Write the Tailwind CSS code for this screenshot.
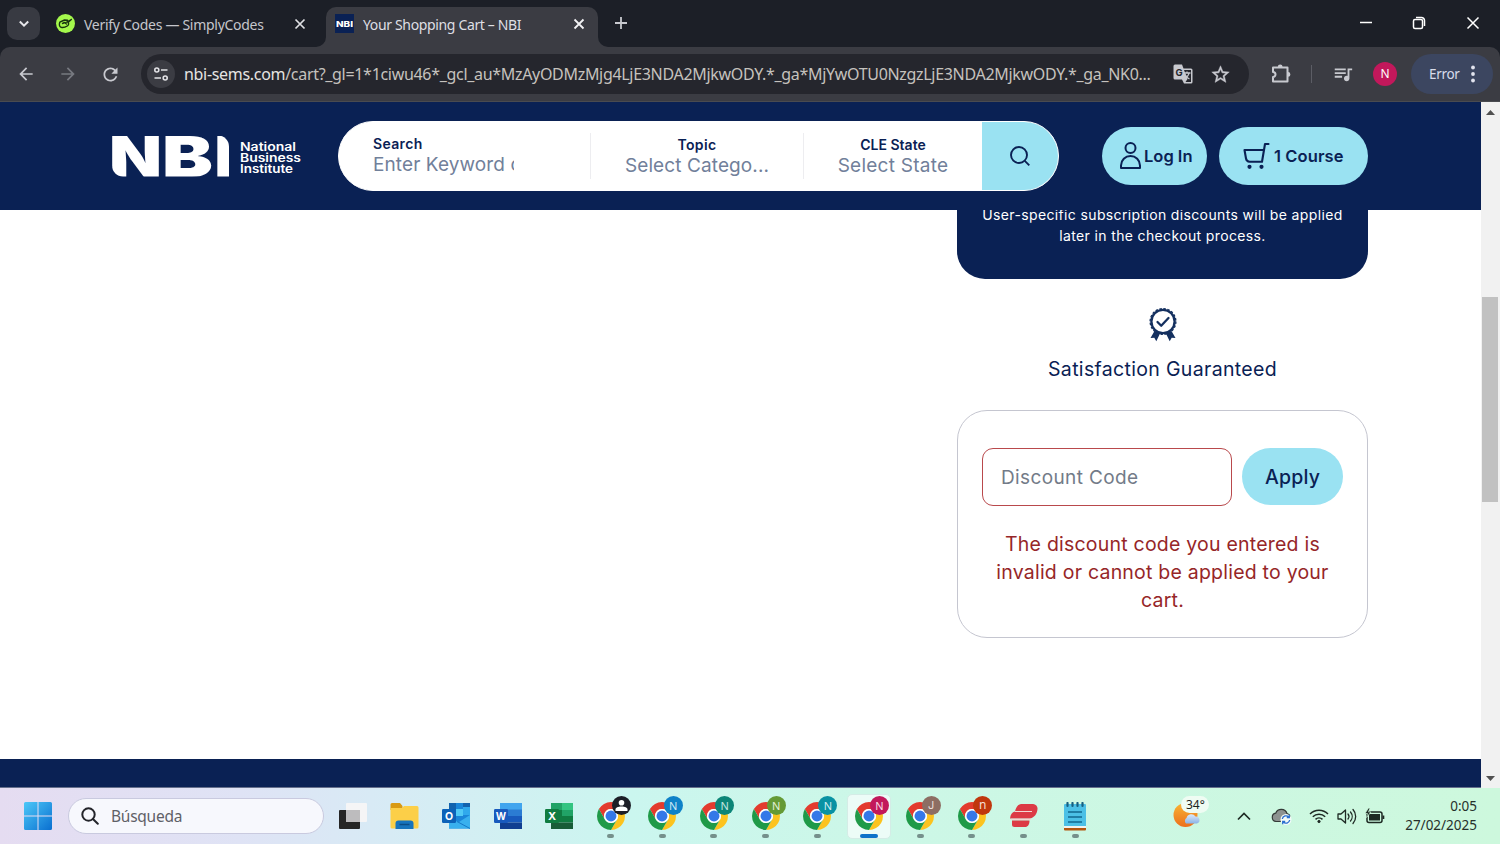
<!DOCTYPE html>
<html lang="en">
<head>
<meta charset="utf-8">
<title>Your Shopping Cart – NBI</title>
<script src="https://cdn.jsdelivr.net/npm/@tailwindcss/browser@4"></script>
</head>
<body class="w-[1500px] h-[844px] overflow-hidden flex flex-col bg-white font-['Noto_Sans',sans-serif]">
<svg class="hidden">
  <symbol id="chrome" viewBox="2 2 44 44">
    <path fill="#e33b2e" d="M24 13H43.05A22 22 0 0 0 4.95 13L14.47 29.5A11 11 0 0 1 24 13z"/>
    <path fill="#fcc31e" d="M43.05 13A22 22 0 0 1 24 46L33.53 29.5A11 11 0 0 0 24 13z"/>
    <path fill="#1f9a48" d="M24 46A22 22 0 0 1 4.95 13L14.47 29.5A11 11 0 0 0 33.53 29.5z"/>
    <circle cx="24" cy="24" r="11" fill="#fff"/><circle cx="24" cy="24" r="8.6" fill="#3478e8"/>
  </symbol>
</svg>

<!-- Tab strip -->
<div class="h-[47px] shrink-0 bg-[#1c1f27] flex items-end">
  <div class="w-[33px] h-[33px] ml-[7px] mb-[7px] rounded-[10px] bg-[#383a42] flex items-center justify-center">
    <svg width="12" height="8" viewBox="0 0 12 8" fill="none" stroke="#e6e6ea" stroke-width="2"><path d="M1.8 1.5 6 5.7l4.2-4.2"/></svg>
  </div>
  <div class="h-10 w-[286px] pl-4 pb-[7px] flex items-center">
    <svg width="19" height="19" viewBox="0 0 19 19"><circle cx="9.5" cy="9.5" r="9.5" fill="#a4f84c"/><path d="M3.8 8.2 8.5 6l3 .3M3.8 8.2c-1 2.500-.3 5 2 5.300 2 .2 4-.5 5.500-1.500 1.500-1 1.700-2.500.7-3.500L15.300 5.500M15.300 5.500 9 9l1.500 1M6.500 9.500l2-1" fill="none" stroke="#17320f" stroke-width="1.4" stroke-linecap="round" stroke-linejoin="round"/></svg>
    <span class="ml-[9px] w-[206px] text-[14px] tracking-[-0.290px] text-[#c5c6cc] whitespace-nowrap leading-5 pt-0.5">Verify Codes — SimplyCodes</span>
    <svg class="ml-1" width="12" height="12" viewBox="0 0 12 12" stroke="#dedfe3" stroke-width="1.700"><path d="m1.500 1.500 9 9M10.500 1.500l-9 9"/></svg>
  </div>
  <div class="relative h-10 w-[272px] rounded-t-[10px] bg-[#3b3c43] pl-[9px] pb-[7px] flex items-center">
    <svg class="absolute -left-[10px] bottom-0" width="10" height="10"><path fill="#3b3c43" d="M10 0v10H0A10 10 0 0 0 10 0z"/></svg>
    <svg class="absolute -right-[10px] bottom-0" width="10" height="10"><path fill="#3b3c43" d="M0 0v10h10A10 10 0 0 1 0 0z"/></svg>
    <div class="w-[19px] h-[19px] bg-[#0a2154] flex items-center justify-center"><svg class="overflow-visible" width="17" height="8"><text x="0" y="7" textLength="17" lengthAdjust="spacingAndGlyphs" font-family="Inter" font-weight="800" font-size="8" fill="#fff">NBI</text></svg></div>
    <span class="ml-[9px] w-[206px] text-[14px] tracking-[-0.350px] text-[#dfdfe4] whitespace-nowrap leading-5 pt-0.5">Your Shopping Cart – NBI</span>
    <svg class="ml-1" width="12" height="12" viewBox="0 0 12 12" stroke="#f2f2f4" stroke-width="1.800"><path d="m1.500 1.500 9 9M10.500 1.500l-9 9"/></svg>
  </div>
  <svg class="ml-4 mb-[17px]" width="14" height="14" viewBox="0 0 14 14" stroke="#c8c9cf" stroke-width="1.800"><path d="M7 1v12M1 7h12"/></svg>
  <div class="ml-auto mr-5 mb-[17px] flex items-center gap-[40px] text-white">
    <svg width="12" height="14" viewBox="0 0 12 14" stroke="currentColor" stroke-width="1.500"><path d="M0 6.500h12"/></svg>
    <svg width="14" height="14" viewBox="0 0 14 14" fill="none" stroke="currentColor" stroke-width="1.500"><rect x="1.500" y="3.500" width="9" height="9" rx="1.500"/><path d="M4 1.500h5.500a3 3 0 0 1 3 3V10"/></svg>
    <svg width="14" height="14" viewBox="0 0 14 14" stroke="currentColor" stroke-width="1.500"><path d="m1.500 1.500 11 11M12.500 1.500l-11 11"/></svg>
  </div>
</div>

<!-- Toolbar -->
<div class="h-[55px] shrink-0 bg-[#1c1f27]"><div class="h-full rounded-t-[10px] bg-[#3b3c43] border-b border-[#4a4b50] flex items-center">
  <svg class="ml-4" width="20" height="20" viewBox="0 0 24 24" fill="#c8c9cf"><path d="M20 11H7.830l5.590-5.590L12 4l-8 8 8 8 1.410-1.410L7.830 13H20v-2z"/></svg>
  <svg class="ml-[22px]" width="20" height="20" viewBox="0 0 24 24" fill="#777980"><path d="m12 4-1.410 1.410L16.170 11H4v2h12.170l-5.580 5.590L12 20l8-8z"/></svg>
  <svg class="ml-[22px]" width="21" height="21" viewBox="0 0 24 24" fill="#c8c9cf"><path d="M17.650 6.350C16.200 4.900 14.210 4 12 4c-4.420 0-7.990 3.580-7.990 8s3.570 8 7.990 8c3.730 0 6.840-2.550 7.730-6h-2.080c-.820 2.330-3.040 4-5.650 4-3.310 0-6-2.690-6-6s2.690-6 6-6c1.660 0 3.140.690 4.220 1.780L13 11h7V4l-2.350 2.350z"/></svg>
  <div class="ml-5 w-[1108px] h-10 rounded-full bg-[#25262d] flex items-center pl-[6px] pr-[18px]">
    <div class="w-7 h-7 shrink-0 rounded-full bg-[#3b3c43] flex items-center justify-center">
      <svg width="16" height="16" viewBox="0 0 16 16" fill="none" stroke="#e2e2e6" stroke-width="1.600"><circle cx="3.800" cy="4" r="2"/><path d="M8 4h6.500M1.500 12H8"/><circle cx="12.200" cy="12" r="2"/></svg>
    </div>
    <span class="ml-[9px] w-[990px] text-[16px] tracking-[-0.310px] leading-6 whitespace-nowrap text-[#c5c2be]"><span class="text-[#e6e4e2]">nbi-sems.com</span>/cart?_gl=1*1ciwu46*_gcl_au*MzAyODMzMjg4LjE3NDA2MjkwODY.*_ga*MjYwOTU0NzgzLjE3NDA2MjkwODY.*_ga_NK0...</span>
    <svg class="shrink-0" width="20" height="20" viewBox="0 0 20 20"><path d="M2 .5h7l1.500 4H18a1.500 1.500 0 0 1 1.500 1.500v12a1.500 1.500 0 0 1-1.500 1.500h-7l-2-4H2A1.500 1.500 0 0 1 .5 14V2A1.500 1.500 0 0 1 2 .5z" fill="#c8c9cf"/><path d="M11 6h7v12h-5.500l2-3z" fill="#25262d"/><text x="2.500" y="12" font-family="Inter" font-weight="700" font-size="9.500" fill="#25262d">G</text><path d="M11 9h6.500M14 7.500V9m2 0c-.5 3-2.500 4.500-4.500 5.500m.5-4c1 2 2.500 3.500 4.500 4.500" fill="none" stroke="#c8c9cf" stroke-width="1.300"/></svg>
    <svg class="ml-[17px] shrink-0" width="21" height="21" viewBox="0 0 24 24" fill="#c8c9cf" stroke="#c8c9cf" stroke-width=".5"><path d="M22 9.240l-7.190-.620L12 2 9.190 8.630 2 9.240l5.460 4.730L5.820 21 12 17.270 18.180 21l-1.630-7.030L22 9.240zM12 15.400l-3.760 2.270 1-4.280-3.320-2.880 4.380-.380L12 6.100l1.710 4.040 4.380.380-3.320 2.880 1 4.280L12 15.400z"/></svg>
  </div>
  <svg class="ml-[22px]" width="20" height="20" viewBox="0 0 20 20"><path d="M2 3.500h14.500V17.500H2V13a2.500 2.500 0 0 0 0-5z" fill="none" stroke="#c8c9cf" stroke-width="2" stroke-linejoin="round"/><path d="M6.800 3a2.400 2.400 0 0 1 4.800 0zM17 8a2.400 2.400 0 0 1 0 4.800z" fill="#c8c9cf"/></svg>
  <div class="ml-5 w-px h-[18px] bg-[#5c5d65]"></div>
  <svg class="ml-5" width="22" height="22" viewBox="0 0 24 24" fill="#c8c9cf"><path d="M15 6H3v2h12V6zm0 4H3v2h12v-2zM3 16h8v-2H3v2zM17 6v8.180c-.310-.110-.650-.180-1-.180-1.660 0-3 1.340-3 3s1.340 3 3 3 3-1.340 3-3V8h3V6h-5z"/></svg>
  <div class="ml-[19px] w-6 h-6 rounded-full bg-[#c2185b] text-white text-[12px] leading-6 text-center">N</div>
  <div class="ml-[14px] w-[82px] h-10 rounded-full bg-[#3c4660] flex items-center pl-[18px]">
    <span class="w-[42px] text-[13.500px] tracking-[-0.300px] text-[#d8dcea]">Error</span>
    <svg width="4" height="18" fill="#e2e4ee"><circle cx="2" cy="2.500" r="1.900"/><circle cx="2" cy="9" r="1.900"/><circle cx="2" cy="15.500" r="1.900"/></svg>
  </div>
</div></div>

<!-- Viewport -->
<div class="h-[686px] shrink-0 flex">
  <div class="w-[1481px] flex flex-col font-['Inter',sans-serif] text-[#0a2154]">
    <header class="h-[108px] shrink-0 bg-[#0a2154] flex items-center pl-[112px]">
      <svg class="overflow-visible" width="117" height="42" viewBox="0 0 117 42" fill="#fff" font-family="Inter" font-weight="900" font-size="57">
        <clipPath id="cut"><path d="M0 .5H106A11 11 0 0 1 117 11.500V41.500H11A11 11 0 0 1 0 30.500z"/></clipPath>
        <g clip-path="url(#cut)"><text x="-3" y="41.500" textLength="53" lengthAdjust="spacingAndGlyphs">N</text><text x="50" y="41.500" textLength="51" lengthAdjust="spacingAndGlyphs">B</text><text x="102.500" y="41.500" textLength="18" lengthAdjust="spacingAndGlyphs">I</text></g>
      </svg>
      <svg class="ml-[10px] overflow-visible" width="64" height="36" fill="#fff" font-family="Inter" font-weight="600" font-size="11.300"><text x="1" y="12.500" textLength="56" lengthAdjust="spacingAndGlyphs">National</text><text x="1" y="23.700" textLength="61" lengthAdjust="spacingAndGlyphs">Business</text><text x="1" y="35" textLength="53" lengthAdjust="spacingAndGlyphs">Institute</text></svg>
      <div class="ml-[35px] w-[721px] h-[70px] rounded-full border border-white bg-white overflow-hidden flex items-center">
        <div class="w-[251px] pl-[34px]">
          <div class="text-[14px] font-semibold leading-[18px] tracking-[0.350px]">Search</div>
          <div class="w-[141px] overflow-hidden whitespace-nowrap text-[19px] leading-6 tracking-[0.100px] text-[#71809a]">Enter Keyword or</div>
        </div>
        <div class="w-[213px] h-[46px] border-l border-[#ededf0] text-center">
          <div class="text-[14px] font-semibold leading-[18px] pt-[3px] tracking-[0.400px]">Topic</div>
          <div class="text-[19px] leading-6 tracking-[0.100px] text-[#71809a]">Select Catego...</div>
        </div>
        <div class="w-[179px] h-[46px] border-l border-[#ededf0] text-center">
          <div class="text-[14px] font-semibold leading-[18px] pt-[3px]">CLE State</div>
          <div class="text-[19px] leading-6 tracking-[0.250px] text-[#71809a]">Select State</div>
        </div>
        <div class="w-[76px] h-[68px] bg-[#9ae2f2] flex items-center justify-center">
          <svg width="22" height="22" viewBox="0 0 22 22" fill="none" stroke="#0a2154" stroke-width="1.900"><circle cx="10" cy="10" r="8"/><path d="m15.800 15.800 4.500 4.500"/></svg>
        </div>
      </div>
      <div class="ml-[43px] w-[105px] h-[58px] rounded-full bg-[#9ae2f2] flex items-center pl-[17px]">
        <svg width="23" height="28" viewBox="0 0 23 28" fill="none" stroke="#0a2154" stroke-width="2" stroke-linejoin="round"><circle cx="11.500" cy="6" r="5"/><path d="M2 26v-2.500a9.500 9.500 0 0 1 19 0v2.500z"/></svg>
        <span class="ml-[2px] text-[16.500px] font-semibold">Log In</span>
      </div>
      <div class="ml-3 w-[149px] h-[58px] rounded-full bg-[#9ae2f2] flex items-center pl-6">
        <svg width="27" height="28" viewBox="0 0 27 28" fill="none" stroke="#0a2154" stroke-width="2.100" stroke-linejoin="round" stroke-linecap="round"><path d="M21 8H1.500L3 16.500a4 4 0 0 0 3.500 3.200H19L22 2H25.500"/><circle cx="6.500" cy="24.800" r="1.300" fill="#0a2154" stroke-width="1.600"/><circle cx="18.500" cy="24.800" r="1.300" fill="#0a2154" stroke-width="1.600"/></svg>
        <span class="ml-1 text-[16.500px] font-semibold tracking-[0.100px]">1 Course</span>
      </div>
    </header>
    <main class="h-[549px] shrink-0 overflow-hidden pl-[957px] bg-white">
      <div class="w-[411px]">
        <div class="h-[69px] rounded-b-[28px] bg-[#0a2154] overflow-hidden">
          <p class="-mt-[6px] text-center text-white text-[14px] leading-[21px] tracking-[0.360px] whitespace-nowrap">User-specific subscription discounts will be applied<br>later in the checkout process.</p>
        </div>
        <div class="mt-7 flex flex-col items-center">
          <svg width="30" height="36" viewBox="0 0 30 36"><path fill="#14305f" d="m6.500 24-4 7 3.800-.3 2 3.500 4-8.200zM23.500 24l4 7-3.800-.3-2 3.500-4-8.200z"/><circle cx="15" cy="14.500" r="11.600" fill="#fff" stroke="#14305f" stroke-width="2.300"/><circle cx="15" cy="14.500" r="12.900" fill="none" stroke="#14305f" stroke-width="1.300" stroke-dasharray="2.500 1.550"/><path d="m9.500 15 3.700 3.700 7.300-7.700" fill="none" stroke="#14305f" stroke-width="2.300" stroke-linecap="round" stroke-linejoin="round"/></svg>
          <div class="mt-3 text-[19.500px] leading-7 tracking-[0.330px] whitespace-nowrap">Satisfaction Guaranteed</div>
        </div>
        <div class="mt-[27px] h-[228px] border border-[#c5c6d0] rounded-[30px] pt-[37px] px-6">
          <div class="flex gap-[10px] items-start">
            <div class="w-[250px] h-[58px] border border-[#b9494c] rounded-[11px] pl-[18px] pt-0.5 flex items-center text-[19px] tracking-[0.370px] text-[#737b88]">Discount Code</div>
            <div class="w-[101px] h-[57px] pt-0.5 rounded-full bg-[#9ae2f2] flex items-center justify-center text-[19.500px] font-medium tracking-[0.200px]">Apply</div>
          </div>
          <p class="mt-6 text-center text-[19.500px] leading-7 tracking-[0.220px] text-[#962628] whitespace-nowrap">The discount code you entered is<br>invalid or cannot be applied to your<br>cart.</p>
        </div>
      </div>
    </main>
    <footer class="h-[29px] shrink-0 bg-[#0a2154] border-b border-[#66708d]"></footer>
  </div>
  <div class="w-[19px] bg-[#f1f1f1] flex flex-col items-center">
    <svg class="mt-2" width="9" height="5" fill="#505050"><path d="M0 5h9L4.500 0z"/></svg>
    <div class="mt-[182px] mr-px w-4 h-[205px] bg-[#c1c1c1]"></div>
    <svg class="mt-auto mb-[7px]" width="9" height="5" fill="#505050"><path d="M0 0h9L4.500 5z"/></svg>
  </div>
</div>

<!-- Taskbar -->
<div class="h-14 shrink-0 flex items-center pl-6 bg-[linear-gradient(90deg,#e5dcf1_0%,#dfe3f5_16%,#d7ebf5_26%,#cbf6ef_42%,#ccf7e7_58%,#cdf8dd_100%)]">
  <svg width="28" height="28" viewBox="0 0 28 28"><defs><linearGradient id="win" x1="0" y1="0" x2="28" y2="28" gradientUnits="userSpaceOnUse"><stop stop-color="#4cc8f8"/><stop offset="1" stop-color="#0a6fd0"/></linearGradient></defs><g fill="url(#win)"><path d="M0 1.500A1.500 1.500 0 0 1 1.500 0h12v13.500H0z"/><path d="M14.500 0h12A1.500 1.500 0 0 1 28 1.500v12H14.500z"/><path d="M0 14.500h13.500V28h-12A1.500 1.500 0 0 1 0 26.500z"/><path d="M14.500 14.500H28v12a1.500 1.500 0 0 1-1.500 1.500h-12z"/></g></svg>
  <div class="ml-4 w-[256px] h-9 rounded-full bg-[#f7f8fd] border border-[#c9cadf] flex items-center pl-3">
    <svg width="18" height="18" viewBox="0 0 18 18" fill="none" stroke="#23242a" stroke-width="2" stroke-linecap="round"><circle cx="7.500" cy="7.500" r="6.200"/><path d="m12.200 12.200 4.600 4.600"/></svg>
    <span class="ml-3 pt-0.5 text-[15.500px] tracking-[-0.250px] text-[#5f6067]">Búsqueda</span>
  </div>
  <div class="ml-[3px] flex h-full">
    <div class="w-[51.600px] flex items-center justify-center"><svg width="28" height="26" viewBox="0 0 28 26"><rect y="7" width="21" height="19" rx="1" fill="#252525"/><rect x="7" y="0" width="21" height="19" rx="1" fill="#f5f5f6"/><path d="M7 7h14v12H7z" fill="#bdbcbe"/></svg></div>
    <div class="w-[51.600px] flex items-center justify-center"><svg width="29" height="26" viewBox="0 0 29 26"><path d="M.5 1.500A1.500 1.500 0 0 1 2 0h8l2.500 3v4H.5z" fill="#d99a13"/><path d="M.5 5H12l2-2h13a1.500 1.500 0 0 1 1.500 1.500V24a1.500 1.500 0 0 1-1.500 1.500H2A1.500 1.500 0 0 1 .5 24z" fill="#fccf48"/><path d="M5.500 26v-5.500a3 3 0 0 1 3-3h12a3 3 0 0 1 3 3V26z" fill="#1774bd"/><path d="M9.500 21.500h10" stroke="#0c4d86" stroke-width="1.500"/></svg></div>
    <div class="w-[51.600px] flex items-center justify-center"><svg width="28" height="26" viewBox="0 0 28 26"><path d="M7 0h21v25.500H7z" fill="#1a86d9"/><path d="M7 0h7v7H7zM21 0h7v4h-7z" fill="#1263ae"/><path d="M14 6h7v7h-7z" fill="#50c9f5"/><path d="M21 4h7v8h-7z" fill="#30a9ec"/><path d="M7 25.500V16l10 3 11-7v13.500z" fill="#39b0ee"/><path d="m28 25.500-13-7" stroke="#1678c8"/><rect y="6" width="14" height="14" rx="1.200" fill="#0c62b8"/><text x="7" y="17" text-anchor="middle" font-family="Inter" font-weight="700" font-size="10.500" fill="#fff">O</text></svg></div>
    <div class="w-[51.600px] flex items-center justify-center"><svg width="28" height="26" viewBox="0 0 28 26"><rect x="6" y="0" width="22" height="7" fill="#41a5ee"/><path fill="#2b7cd3" d="M6 6.500h22V13H6z"/><path fill="#185abd" d="M6 13h22v6.500H6z"/><path fill="#103f91" d="M6 19.500h22V26H6z"/><rect y="6" width="14" height="14" rx="1.200" fill="#185abd"/><text x="7" y="16.800" text-anchor="middle" font-family="Inter" font-weight="700" font-size="10" fill="#fff">W</text></svg></div>
    <div class="w-[51.600px] flex items-center justify-center"><svg width="28" height="26" viewBox="0 0 28 26"><path fill="#21a366" d="M6 0h11v7H6z"/><path fill="#33c481" d="M17 0h11v7H17z"/><path fill="#107c41" d="M6 7h11v12.500H6z"/><path fill="#21a366" d="M17 7h11v6H17z"/><path fill="#107c41" d="M17 13h11v6.500H17z"/><path fill="#185c37" d="M6 19.500h22V26H6z"/><rect y="6" width="14" height="14" rx="1.200" fill="#107c41"/><text x="7" y="17" text-anchor="middle" font-family="Inter" font-weight="700" font-size="11" fill="#fff">X</text></svg></div>

    <div class="relative w-[51.600px] flex items-center justify-center"><svg width="28" height="28"><use href="#chrome"/></svg>
      <div class="absolute left-[27px] top-[8px] w-[19px] h-[19px] rounded-full bg-[#1c1e26] flex items-center justify-center"><svg width="13" height="13" fill="#fff"><circle cx="6.500" cy="3.800" r="2.800"/><path d="M.5 12V10.500C.5 8.500 3 7.500 6.500 7.500s6 1 6 3V12z"/></svg></div>
      <div class="absolute bottom-[6px] w-[7px] h-1 rounded-full bg-[#75908b]"></div></div>
    <div class="relative w-[51.600px] flex items-center justify-center"><svg width="28" height="28"><use href="#chrome"/></svg>
      <div class="absolute left-[27px] top-[8px] w-[19px] h-[19px] rounded-full bg-[#0e82c8] text-[#cfe8f5] text-[11px] leading-[19px] text-center">N</div>
      <div class="absolute bottom-[6px] w-[7px] h-1 rounded-full bg-[#75908b]"></div></div>
    <div class="relative w-[51.600px] flex items-center justify-center"><svg width="28" height="28"><use href="#chrome"/></svg>
      <div class="absolute left-[27px] top-[8px] w-[19px] h-[19px] rounded-full bg-[#0c8577] text-[#c3e5e0] text-[11px] leading-[19px] text-center">N</div>
      <div class="absolute bottom-[6px] w-[7px] h-1 rounded-full bg-[#75908b]"></div></div>
    <div class="relative w-[51.600px] flex items-center justify-center"><svg width="28" height="28"><use href="#chrome"/></svg>
      <div class="absolute left-[27px] top-[8px] w-[19px] h-[19px] rounded-full bg-[#659a35] text-[#e3f0d6] text-[11px] leading-[19px] text-center">N</div>
      <div class="absolute bottom-[6px] w-[7px] h-1 rounded-full bg-[#75908b]"></div></div>
    <div class="relative w-[51.600px] flex items-center justify-center"><svg width="28" height="28"><use href="#chrome"/></svg>
      <div class="absolute left-[27px] top-[8px] w-[19px] h-[19px] rounded-full bg-[#0992a3] text-[#d2eef2] text-[11px] leading-[19px] text-center">N</div>
      <div class="absolute bottom-[6px] w-[7px] h-1 rounded-full bg-[#75908b]"></div></div>
    <div class="relative w-[51.600px] flex items-center justify-center"><div class="w-11 h-[45px] rounded-[5px] bg-[#ecfcf7] border border-[#d4ece6] flex items-center justify-center"><svg width="28" height="28"><use href="#chrome"/></svg></div>
      <div class="absolute left-[27px] top-[8px] w-[19px] h-[19px] rounded-full bg-[#c2185b] text-[#f8dbe6] text-[11px] leading-[19px] text-center">N</div>
      <div class="absolute bottom-[6px] w-[18px] h-1 rounded-full bg-[#0e72c9]"></div></div>
    <div class="relative w-[51.600px] flex items-center justify-center"><svg width="28" height="28"><use href="#chrome"/></svg>
      <div class="absolute left-[27px] top-[8px] w-[19px] h-[19px] rounded-full bg-[#8d6e63] text-[#eadfdb] text-[11px] font-['Inter'] leading-[19px] text-center">J</div>
      <div class="absolute bottom-[6px] w-[7px] h-1 rounded-full bg-[#75908b]"></div></div>
    <div class="relative w-[51.600px] flex items-center justify-center"><svg width="28" height="28"><use href="#chrome"/></svg>
      <div class="absolute left-[27px] top-[8px] w-[19px] h-[19px] rounded-full bg-[#c0370d] text-[#f6dcd2] text-[12px] leading-[18px] text-center">n</div>
      <div class="absolute bottom-[6px] w-[7px] h-1 rounded-full bg-[#75908b]"></div></div>
    <div class="relative w-[51.600px] flex items-center justify-center"><svg width="28" height="24" viewBox="0 0 28 24"><path d="M11 0H23a4.500 4.500 0 0 1 4.500 5c-.3 5-3.500 9-8 9.500H0C.5 10.500 2 8 5 7.500 6 3 8 .5 11 0zM2 16.500h17.500C19.500 20.500 18 23 15 23H4.500A2.500 2.500 0 0 1 2 20.500z" fill="#dc3a45"/><path d="M5 7.500h17M1 15.300h20" stroke="#f2d8d3" stroke-width="1.200"/></svg>
      <div class="absolute bottom-[6px] w-[7px] h-1 rounded-full bg-[#75908b]"></div></div>
    <div class="relative w-[51.600px] flex items-center justify-center"><svg width="22" height="29" viewBox="0 0 22 29"><rect y="2" width="22" height="23" rx="1" fill="#4cc0e6"/><path d="M0 24h22v2H0z" fill="#f2f2ee"/><path d="M0 26h22v1.500a1 1 0 0 1-1 1H1a1 1 0 0 1-1-1z" fill="#b3560f"/><path d="M4 10h14M4 15h14M4 20h14" stroke="#126890" stroke-width="1.500"/><path d="M3.500 1v3M8.500 1v3M13.500 1v3M18.500 1v3" stroke="#175f80" stroke-width="2.200" stroke-linecap="round"/></svg>
      <div class="absolute bottom-[6px] w-[7px] h-1 rounded-full bg-[#75908b]"></div></div>
  </div>
  <div class="relative ml-[72.500px] w-9 h-9">
    <svg width="36" height="36" viewBox="0 0 36 36"><defs><linearGradient id="sun" x2="0" y2="1"><stop stop-color="#f9b433"/><stop offset="1" stop-color="#ec6f1c"/></linearGradient><linearGradient id="cl" x2="0" y2="1"><stop stop-color="#dceafb"/><stop offset="1" stop-color="#8cb3e6"/></linearGradient></defs><circle cx="12.500" cy="17" r="12" fill="url(#sun)"/><path d="M13 25.500a3.500 3.500 0 0 1 .5-5.500 5 5 0 0 1 9-1.500 3.600 3.600 0 0 1 1.500 7z" fill="url(#cl)"/></svg>
    <div class="absolute left-[8px] -top-[2px] w-[28px] h-[17px] rounded-full bg-[#effcf3] text-[12px] leading-[17px] text-[#1c2420] text-center">34°</div>
  </div>
  <svg class="ml-7" width="14" height="9" viewBox="0 0 14 9" fill="none" stroke="#1e2a24" stroke-width="1.700"><path d="M1 7.500 7 1.500l6 6"/></svg>
  <svg class="ml-5" width="21" height="17" viewBox="0 0 21 17"><path d="M5 13.500a4.200 4.200 0 0 1-.3-8.300A6 6 0 0 1 16 5.500a4 4 0 0 1 3 4v4z" fill="#8d9290" stroke="#343a37" stroke-width="1.200"/><circle cx="15" cy="11.500" r="5.500" fill="#f3fbf8"/><path d="M11.300 11a3.800 3.800 0 0 1 6.500-2M18.700 12a3.800 3.800 0 0 1-6.500 2M18.300 6.800V9.500h-2.500M11.700 16.200v-2.700h2.500" fill="none" stroke="#2b6fd0" stroke-width="1.300"/></svg>
  <svg class="ml-[17px]" width="20" height="16" viewBox="0 0 20 16" fill="none" stroke="#1e2a24" stroke-width="1.500"><path d="M1 6a12.500 12.500 0 0 1 18 0M3.800 8.800a8.700 8.700 0 0 1 12.400 0M6.500 11.400a5 5 0 0 1 7 0"/><circle cx="10" cy="13.500" r="1.200" fill="#1e2a24" stroke-width=".8"/></svg>
  <svg class="ml-2" width="20" height="17" viewBox="0 0 20 17" fill="none" stroke="#1e2a24" stroke-width="1.300" stroke-linejoin="round" stroke-linecap="round"><path d="M1 6v5h3l4.500 4V2L4 6zM11 6a4 4 0 0 1 0 5M13.500 4a7 7 0 0 1 0 9M16 1.500a10.500 10.500 0 0 1 0 14"/></svg>
  <svg class="ml-2" width="20" height="16" viewBox="0 0 20 16"><rect x="2" y="4" width="15" height="10.500" rx="2" fill="none" stroke="#1e2a24" stroke-width="1.500"/><rect x="4" y="6" width="11" height="6.500" fill="#1e2a24"/><path d="M17.500 7.500h1.800v3.500h-1.800z" fill="#1e2a24"/><path d="M3.500 0 0 5.500h2.500L1.500 9.500 6 4H3.500L5 0z" fill="#1e2a24" stroke="#cdf8dd" stroke-width=".7"/></svg>
  <div class="ml-auto mr-[23px] text-right text-[13.500px] leading-[19px] text-[#26302b] whitespace-nowrap">0:05<br>27/02/2025</div>
</div>
</body>
</html>
